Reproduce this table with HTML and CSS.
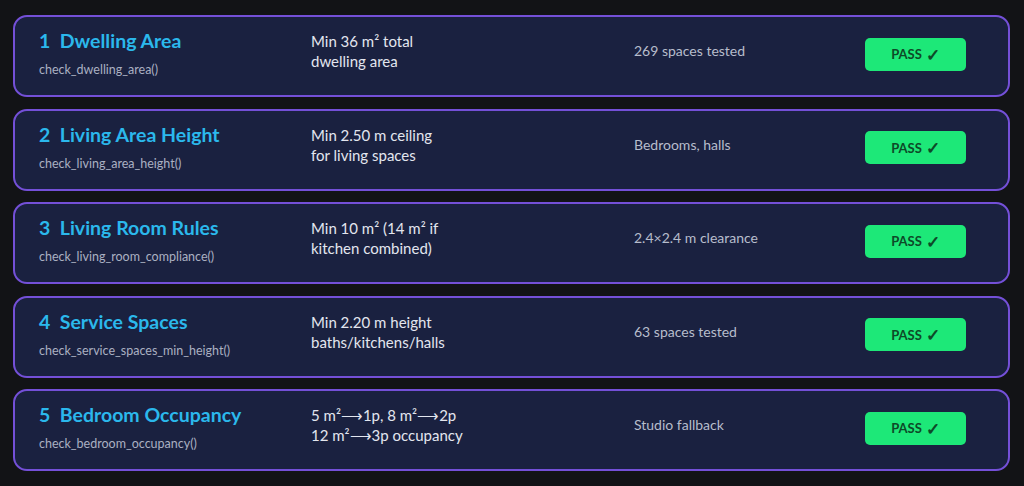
FILE: index.html
```html
<!DOCTYPE html>
<html>
<head>
<meta charset="utf-8">
<link rel="stylesheet" href="styles.css">
</head>
<body>
<div class="list">
  <div class="card">
    <div class="name"><div class="title">1&nbsp; Dwelling Area</div><div class="fn">check_dwelling_area()</div></div>
    <div class="rule">Min 36 m² total<br>dwelling area</div>
    <div class="note">269 spaces tested</div>
    <div class="badge">PASS <span class="tick">✓</span></div>
  </div>
  <div class="card">
    <div class="name"><div class="title">2&nbsp; Living Area Height</div><div class="fn">check_living_area_height()</div></div>
    <div class="rule">Min 2.50 m ceiling<br>for living spaces</div>
    <div class="note">Bedrooms, halls</div>
    <div class="badge">PASS <span class="tick">✓</span></div>
  </div>
  <div class="card">
    <div class="name"><div class="title">3&nbsp; Living Room Rules</div><div class="fn">check_living_room_compliance()</div></div>
    <div class="rule">Min 10 m² (14 m² if<br>kitchen combined)</div>
    <div class="note">2.4×2.4 m clearance</div>
    <div class="badge">PASS <span class="tick">✓</span></div>
  </div>
  <div class="card">
    <div class="name"><div class="title">4&nbsp; Service Spaces</div><div class="fn">check_service_spaces_min_height()</div></div>
    <div class="rule">Min 2.20 m height<br>baths/kitchens/halls</div>
    <div class="note">63 spaces tested</div>
    <div class="badge">PASS <span class="tick">✓</span></div>
  </div>
  <div class="card">
    <div class="name"><div class="title">5&nbsp; Bedroom Occupancy</div><div class="fn">check_bedroom_occupancy()</div></div>
    <div class="rule">5 m²⟶1p, 8 m²⟶2p<br>12 m²⟶3p occupancy</div>
    <div class="note">Studio fallback</div>
    <div class="badge">PASS <span class="tick">✓</span></div>
  </div>
</div>
</body>
</html>
```
FILE: styles.css
```css
html, body {
  margin: 0;
  padding: 0;
  background: #121316;
  width: 1024px;
  height: 486px;
  overflow: hidden;
  font-family: Lato, "Open Sans", "Liberation Sans", sans-serif;
}
.list {
  display: flex;
  flex-direction: column;
  gap: 11.5px;
  padding: 15px 14px 0 13px;
}
.card {
  box-sizing: border-box;
  height: 82px;
  border: 2px solid #7450d8;
  border-radius: 14px;
  background: #1a2140;
  display: grid;
  grid-template-columns: 272px 323px 1fr 101px;
  align-items: center;
  padding: 0 42px 0 24px;
}
.title {
  color: #2bb8ec;
  font-weight: 700;
  font-size: 19.5px;
  line-height: 22px;
}
.fn {
  color: #aab0c2;
  font-size: 12.5px;
  line-height: 16px;
  margin-top: 10px;
}
.name { margin-top: -4px; }
.rule {
  color: #e3e6ef;
  font-size: 15px;
  line-height: 20px;
  margin-top: -10px;
}
.note {
  color: #b7bdcc;
  font-size: 14px;
  line-height: 18px;
  margin-top: -10px;
}
.badge {
  height: 33px;
  border-radius: 5px;
  background: #1de878;
  color: #0d4a28;
  font-weight: 700;
  font-size: 13px;
  display: flex;
  align-items: center;
  justify-content: center;
  gap: 4px;
  margin-top: -4px;
}
.tick {
  font-size: 17px;
  line-height: 1;
}
```
